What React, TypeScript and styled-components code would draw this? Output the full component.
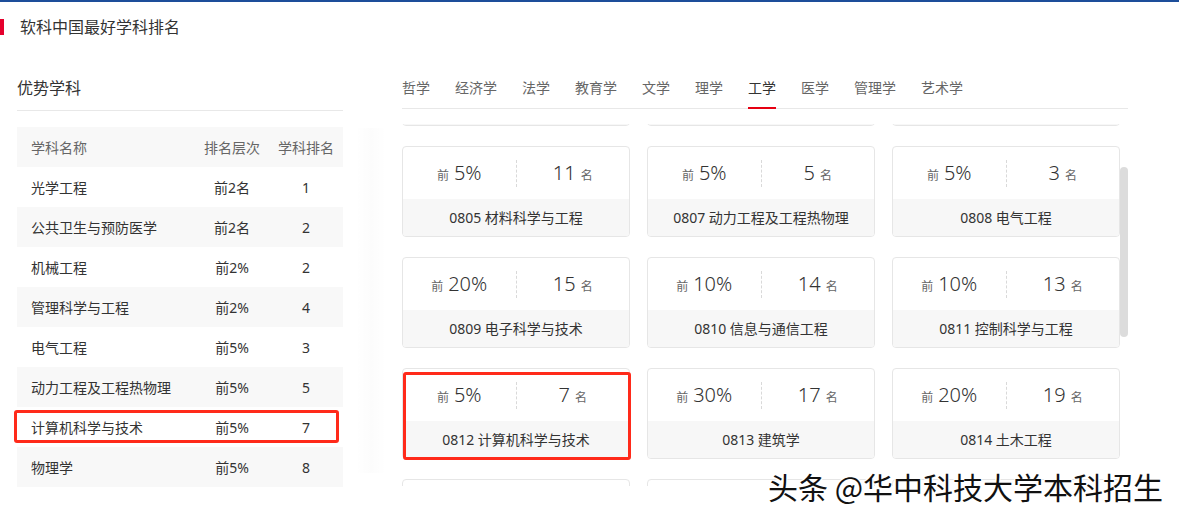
import React, { useLayoutEffect, useRef } from "react";
import styled, { createGlobalStyle } from "styled-components";

const GlobalStyle = createGlobalStyle`
  html, body { margin: 0; padding: 0; background: #fff; }
  body { font-family: "Noto Sans", "Noto Sans CJK SC", sans-serif; color: #333; }
  * { box-sizing: border-box; }
`;

const Page = styled.div`
  position: relative;
  width: 1179px;
  height: 517px;
  overflow: hidden;
  border-top: 2px solid #1d4e9a;
  background: #fff;
`;

const TitleBar = styled.div`
  display: flex;
  align-items: center;
  gap: 16px;
  margin-top: 16px;
  height: 18px;
`;

const Mark = styled.span`
  width: 4px;
  height: 16px;
  background: #e5002d;
`;

const Title = styled.h1`
  margin: 0;
  font-size: 16px;
  line-height: 18px;
  font-weight: 400;
  color: #333;
`;

const Main = styled.div`
  display: flex;
  gap: 59px;
  margin-top: 40px;
  padding-left: 17px;
`;

const LeftCol = styled.section`
  width: 326px;
  flex: none;
`;

const SectionHead = styled.h2`
  margin: 0;
  font-size: 16px;
  line-height: 24px;
  font-weight: 400;
  color: #333;
  padding-bottom: 10px;
  border-bottom: 1px solid #e8e8e8;
`;

const Table = styled.div`
  margin-top: 16px;
`;

const Row = styled.div<{ $shade?: boolean; $head?: boolean }>`
  position: relative;
  display: grid;
  grid-template-columns: 178px 74px 74px;
  height: 40px;
  align-items: center;
  font-size: 14px;
  color: ${(p) => (p.$head ? "#666" : "#333")};
  background: ${(p) => (p.$shade ? "#f8f8f8" : "#fff")};
`;

const NameCell = styled.span`
  padding-left: 14px;
  white-space: nowrap;
`;

const Cell = styled.span`
  text-align: center;
  white-space: nowrap;
`;

const RowMark = styled.span`
  position: absolute;
  top: 3px;
  left: -3px;
  right: 4px;
  bottom: 4px;
  border: 3px solid #ff2a1a;
  border-radius: 3px;
  pointer-events: none;
`;

const RightCol = styled.section`
  width: 726px;
  flex: none;
`;

const TabBar = styled.div`
  display: flex;
  border-bottom: 1px solid #e8e8e8;
`;

const Tab = styled.span<{ $active?: boolean }>`
  font-size: 14px;
  line-height: 22px;
  padding: 1px 0 8px;
  margin-right: 25px;
  margin-bottom: -1px;
  color: ${(p) => (p.$active ? "#333" : "#666")};
  border-bottom: 2px solid ${(p) => (p.$active ? "#e60012" : "transparent")};
  white-space: nowrap;
`;

const ScrollArea = styled.div`
  position: relative;
  margin-top: 15px;
  height: 362px;
  &::before {
    content: "";
    position: absolute;
    left: -47px;
    top: 4px;
    width: 32px;
    height: 345px;
    background: linear-gradient(90deg, rgba(0,0,0,0) 0%, rgba(0,0,0,0.012) 50%, rgba(0,0,0,0) 100%);
  }
`;

const Scroller = styled.div`
  height: 100%;
  overflow: hidden;
  padding-right: 8px;
`;

const Thumb = styled.div`
  position: absolute;
  right: 0;
  top: 43px;
  width: 8px;
  height: 170px;
  border-radius: 4px;
  background: #dcdcdc;
`;

const Grid = styled.div`
  display: grid;
  grid-template-columns: repeat(3, 228px);
  column-gap: 17px;
  row-gap: 20px;
  padding-bottom: 40px;
`;

const Card = styled.div`
  position: relative;
  border: 1px solid #e6e6e6;
  border-radius: 4px;
  background: #fff;
`;

const Stats = styled.div`
  display: flex;
  align-items: center;
  height: 52px;
`;

const Half = styled.div`
  flex: 1;
  text-align: center;
  white-space: nowrap;
`;

const Divider = styled.span`
  width: 0;
  height: 27px;
  border-left: 1px dashed #d9d9d9;
`;

const Small = styled.span<{ $after?: boolean }>`
  font-size: 12px;
  color: #666;
  ${(p) => (p.$after ? "margin-left: 5px;" : "margin-right: 5px;")}
`;

const Big = styled.span`
  font-size: 20px;
  font-weight: 300;
  color: #333;
  line-height: 28px;
`;

const Label = styled.div`
  height: 37px;
  line-height: 37px;
  text-align: center;
  font-size: 14px;
  color: #333;
  background: #f7f7f7;
  border-radius: 0 0 3px 3px;
  white-space: nowrap;
`;

const CardMark = styled.span`
  position: absolute;
  top: 3px;
  left: 0;
  right: -2px;
  bottom: -2px;
  border: 3px solid #ff2a1a;
  border-radius: 3px;
  pointer-events: none;
`;

const Watermark = styled.div`
  position: absolute;
  left: 768px;
  top: 469px;
  font-family: "Noto Sans CJK SC", sans-serif;
  font-size: 30px;
  line-height: 1;
  color: #111;
  white-space: nowrap;
  text-shadow: 1px 1px 0 #fff, -1px -1px 0 #fff, 1px -1px 0 #fff, -1px 1px 0 #fff,
    0 1px 0 #fff, 0 -1px 0 #fff, 1px 0 0 #fff, -1px 0 0 #fff;
`;

const subjects = [
  { name: "光学工程", level: "前2名", rank: "1" },
  { name: "公共卫生与预防医学", level: "前2名", rank: "2" },
  { name: "机械工程", level: "前2%", rank: "2" },
  { name: "管理科学与工程", level: "前2%", rank: "4" },
  { name: "电气工程", level: "前5%", rank: "3" },
  { name: "动力工程及工程热物理", level: "前5%", rank: "5" },
  { name: "计算机科学与技术", level: "前5%", rank: "7", mark: true },
  { name: "物理学", level: "前5%", rank: "8" },
];

const tabs = ["哲学", "经济学", "法学", "教育学", "文学", "理学", "工学", "医学", "管理学", "艺术学"];

const cards = [
  { pct: "2%", rank: "2", label: "0802 机械工程" },
  { pct: "2名", rank: "1", label: "0803 光学工程" },
  { pct: "10%", rank: "9", label: "0804 仪器科学与技术" },
  { pct: "5%", rank: "11", label: "0805 材料科学与工程" },
  { pct: "5%", rank: "5", label: "0807 动力工程及工程热物理" },
  { pct: "5%", rank: "3", label: "0808 电气工程" },
  { pct: "20%", rank: "15", label: "0809 电子科学与技术" },
  { pct: "10%", rank: "14", label: "0810 信息与通信工程" },
  { pct: "10%", rank: "13", label: "0811 控制科学与工程" },
  { pct: "5%", rank: "7", label: "0812 计算机科学与技术", mark: true },
  { pct: "30%", rank: "17", label: "0813 建筑学" },
  { pct: "20%", rank: "19", label: "0814 土木工程" },
  { pct: "30%", rank: "21", label: "0815 水利工程" },
  { pct: "20%", rank: "25", label: "0817 化学工程与技术" },
  { pct: "30%", rank: "20", label: "0830 环境科学与工程" },
];

export default function App() {
  const scrollRef = useRef<HTMLDivElement>(null);
  useLayoutEffect(() => {
    if (scrollRef.current) scrollRef.current.scrollTop = 89;
  }, []);

  return (
    <>
      <GlobalStyle />
      <Page>
        <TitleBar>
          <Mark />
          <Title>软科中国最好学科排名</Title>
        </TitleBar>
        <Main>
          <LeftCol>
            <SectionHead>优势学科</SectionHead>
            <Table>
              <Row $head $shade>
                <NameCell>学科名称</NameCell>
                <Cell>排名层次</Cell>
                <Cell>学科排名</Cell>
              </Row>
              {subjects.map((s, i) => (
                <Row key={s.name} $shade={i % 2 === 1}>
                  <NameCell>{s.name}</NameCell>
                  <Cell>{s.level}</Cell>
                  <Cell>{s.rank}</Cell>
                  {s.mark && <RowMark />}
                </Row>
              ))}
            </Table>
          </LeftCol>
          <RightCol>
            <TabBar>
              {tabs.map((t) => (
                <Tab key={t} $active={t === "工学"}>
                  {t}
                </Tab>
              ))}
            </TabBar>
            <ScrollArea>
              <Scroller ref={scrollRef}>
                <Grid>
                  {cards.map((c) => (
                    <Card key={c.label}>
                      <Stats>
                        <Half>
                          <Small>前</Small>
                          <Big>{c.pct}</Big>
                        </Half>
                        <Divider />
                        <Half>
                          <Big>{c.rank}</Big>
                          <Small $after>名</Small>
                        </Half>
                      </Stats>
                      <Label>{c.label}</Label>
                      {c.mark && <CardMark />}
                    </Card>
                  ))}
                </Grid>
              </Scroller>
              <Thumb />
            </ScrollArea>
          </RightCol>
        </Main>
        <Watermark>头条 @华中科技大学本科招生</Watermark>
      </Page>
    </>
  );
}
